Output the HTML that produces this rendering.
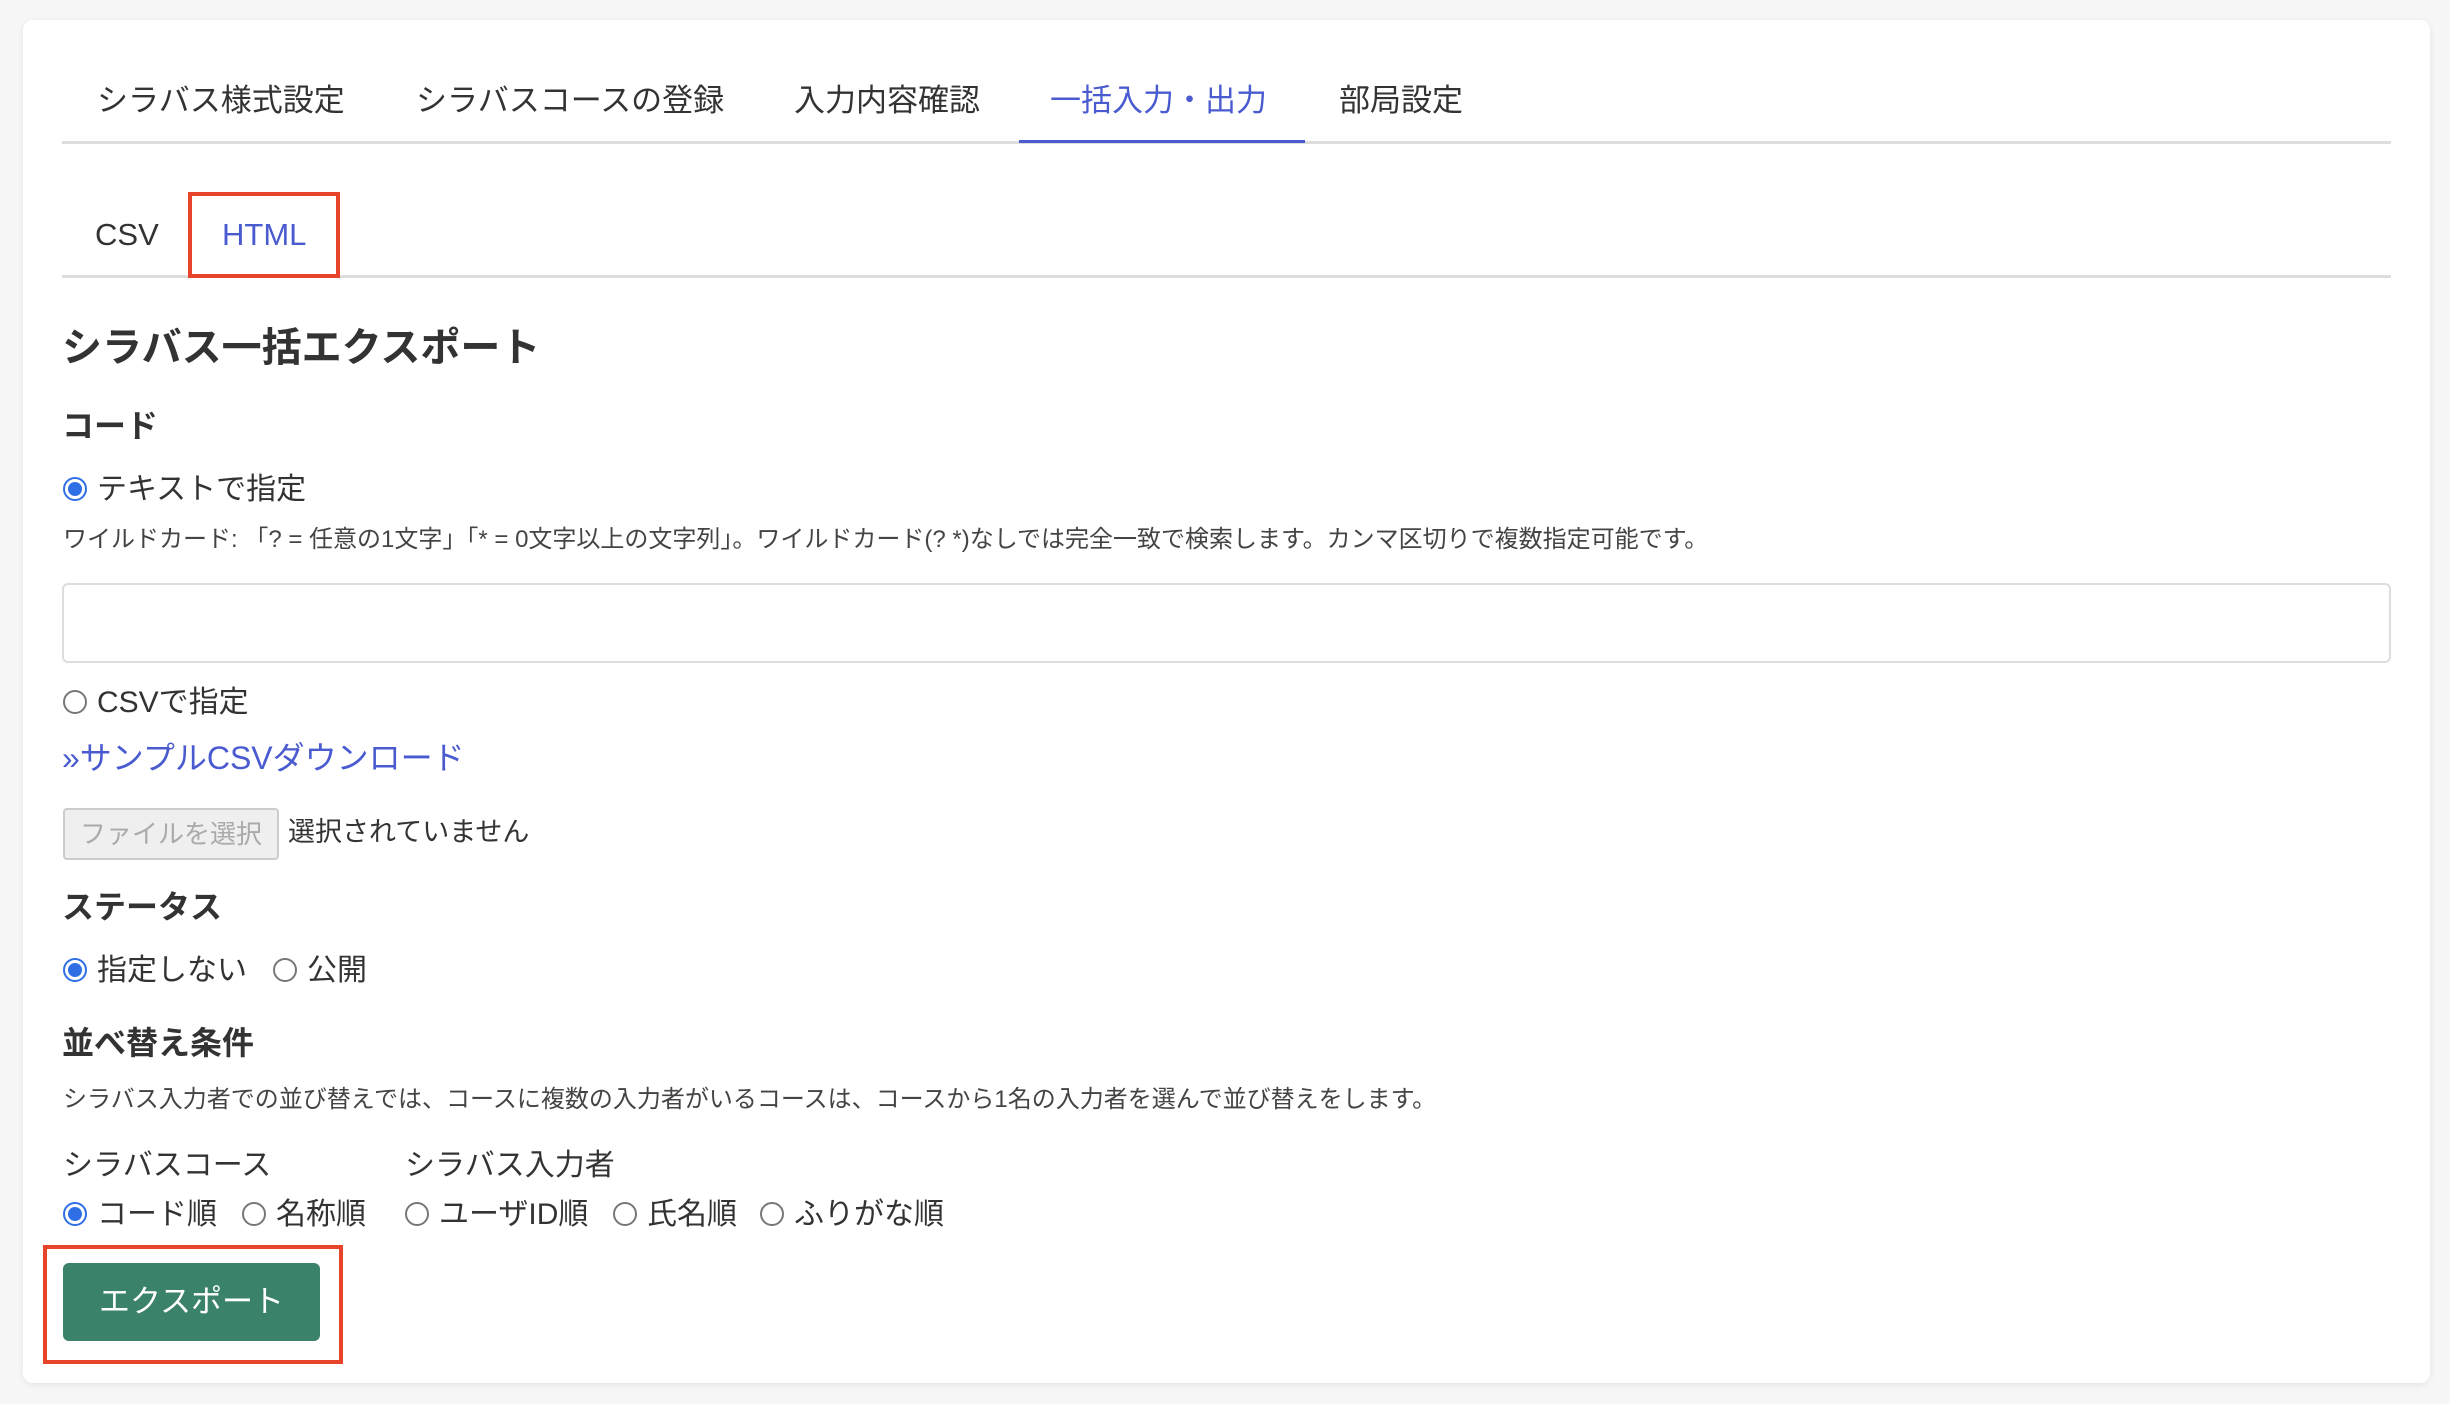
<!DOCTYPE html>
<html><head><meta charset="utf-8"><style>
body{margin:0;width:2450px;height:1404px;background:#f7f7f7;font-family:"Liberation Sans","Noto Sans CJK JP",sans-serif;color:#333;position:relative;overflow:hidden}
.card{position:absolute;left:23px;top:20px;width:2407px;height:1363px;background:#fff;border-radius:10px;box-shadow:0 2px 8px rgba(0,0,0,.08)}
.a{position:absolute;white-space:nowrap;line-height:1}
.tab{font-size:31px;color:#333;top:85px}
.line{position:absolute;height:3px;background:#ddd}
.radio{position:absolute;width:20px;height:20px;border:2px solid #777;border-radius:50%;background:#fff}
.radio.on{border-color:#2f6fe6;}
.radio.on::after{content:"";position:absolute;left:3px;top:3px;width:14px;height:14px;border-radius:50%;background:#2f6fe6}
.t30{font-size:30px;color:#333}
.h{font-weight:bold;color:#333}
.note{font-size:24px;color:#444}
</style></head><body>
<div class="card"></div>
<div class="a tab" style="left:97px">シラバス様式設定</div>
<div class="a tab" style="left:416px">シラバスコースの登録</div>
<div class="a tab" style="left:794px">入力内容確認</div>
<div class="a tab" style="left:1050px;color:#4a5bd0">一括入力・出力</div>
<div class="a tab" style="left:1339px">部局設定</div>
<div class="line" style="left:62px;top:141px;width:2329px"></div>
<div class="line" style="left:1019px;top:140px;width:286px;background:#4a5bd0"></div>

<div class="a tab" style="left:95px;top:219px">CSV</div>
<div class="a tab" style="left:222px;top:219px;color:#4a5bd0">HTML</div>
<div class="line" style="left:62px;top:275px;width:2329px"></div>
<div style="position:absolute;left:188px;top:192px;width:144px;height:78px;border:4px solid #e8442c"></div>

<div class="a h" style="left:62px;top:328px;font-size:40px">シラバス一括エクスポート</div>
<div class="a h" style="left:62px;top:410px;font-size:32px">コード</div>
<div class="radio on" style="left:63px;top:477px"></div>
<div class="a t30" style="left:97px;top:475px">テキストで指定</div>
<div class="a note" style="left:63px;top:528px">ワイルドカード: 「? = 任意の1文字」「* = 0文字以上の文字列」。ワイルドカード(? *)なしでは完全一致で検索します。カンマ区切りで複数指定可能です。</div>
<div style="position:absolute;left:62px;top:583px;width:2325px;height:76px;border:2px solid #ddd;border-radius:6px"></div>
<div class="radio" style="left:63px;top:690px"></div>
<div class="a t30" style="left:97px;top:688px">CSVで指定</div>
<div class="a" style="left:62px;top:742px;font-size:32px;color:#4a5bd0">»サンプルCSVダウンロード</div>
<div style="position:absolute;left:63px;top:808px;width:212px;height:48px;border:2px solid #ccc;border-radius:4px;background:#efefef;color:#aaa;font-size:26px;line-height:48px;text-align:center">ファイルを選択</div>
<div class="a" style="left:288px;top:819px;font-size:27px;color:#333">選択されていません</div>

<div class="a h" style="left:62px;top:891px;font-size:32px">ステータス</div>
<div class="radio on" style="left:63px;top:958px"></div>
<div class="a t30" style="left:97px;top:956px">指定しない</div>
<div class="radio" style="left:273px;top:958px"></div>
<div class="a t30" style="left:307px;top:956px">公開</div>

<div class="a h" style="left:62px;top:1027px;font-size:32px">並べ替え条件</div>
<div class="a note" style="left:63px;top:1088px">シラバス入力者での並び替えでは、コースに複数の入力者がいるコースは、コースから1名の入力者を選んで並び替えをします。</div>
<div class="a t30" style="left:63px;top:1151px">シラバスコース</div>
<div class="a t30" style="left:405px;top:1151px">シラバス入力者</div>
<div class="radio on" style="left:63px;top:1202px"></div>
<div class="a t30" style="left:97px;top:1200px">コード順</div>
<div class="radio" style="left:242px;top:1202px"></div>
<div class="a t30" style="left:276px;top:1200px">名称順</div>
<div class="radio" style="left:405px;top:1202px"></div>
<div class="a t30" style="left:439px;top:1200px">ユーザID順</div>
<div class="radio" style="left:613px;top:1202px"></div>
<div class="a t30" style="left:647px;top:1200px">氏名順</div>
<div class="radio" style="left:760px;top:1202px"></div>
<div class="a t30" style="left:794px;top:1200px">ふりがな順</div>

<div style="position:absolute;left:63px;top:1263px;width:257px;height:78px;background:#3a826a;border-radius:6px;color:#fff;font-size:31px;line-height:78px;text-align:center">エクスポート</div>
<div style="position:absolute;left:43px;top:1245px;width:292px;height:111px;border:4px solid #e8442c"></div>
</body></html>
